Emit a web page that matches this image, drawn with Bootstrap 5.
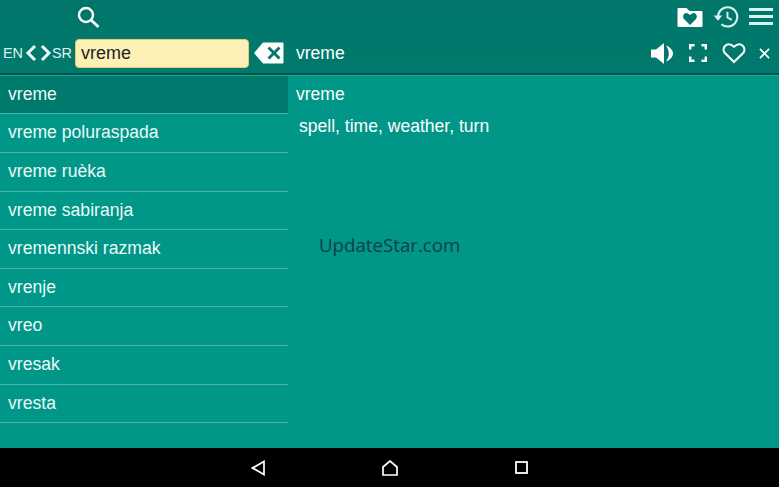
<!DOCTYPE html>
<html lang="en"><head><meta charset="utf-8"><title>Dictionary</title>
<link href="https://cdn.jsdelivr.net/npm/bootstrap@5.3.0/dist/css/bootstrap.min.css" rel="stylesheet">
<style>
html,body{height:487px;overflow:hidden;margin:0}
body{background:#009688;font-family:"Liberation Sans",Arial,sans-serif;color:#fff;width:779px}
.appframe{height:487px}
.hdr{background:linear-gradient(#00766a,#007a6c);height:75px;border-bottom:2px solid #04574e;box-shadow:0 1px 0 #1aa595}
.hdr-top{height:33px;padding-left:76px;padding-right:6px}
.tools-b{gap:10px}
.hdr-bot{height:40px}
.left-hdr{width:289px;padding-left:3px}
.lang{font-size:14.4px;line-height:1;color:#dff5f1}
.chev-a{margin-left:2px;margin-right:3px}
.srch{flex:none;width:174px;height:29px;background:#fdf0b6;border:1px solid #e6c877;border-radius:4px;font-size:18px;color:#222;padding:0 0 0 5px;margin-left:3px;margin-right:5px;line-height:27px;box-shadow:none}
.srch:focus{background:#fdf0b6;border-color:#e6c877;box-shadow:none;color:#222}
.term{font-size:17.5px;padding-left:7px}
.tools-a{padding-right:9px}
.gap-spk{margin-right:16px}
.gap-full{margin-right:15px}
.gap-heart{margin-right:13px}
.main-area{height:373px;position:relative}
.word-col{width:288px;display:block;padding-top:.8px}
.word-col>.word-item,.word-col>.word-item:last-child{height:38.6px;line-height:37px;font-size:17.6px;padding:0 0 0 8px;background:transparent;border:0;border-bottom:1px solid #4cb5a9;color:#eafaf7;border-radius:0}
.word-col>.word-item.active{background:#007a6c;color:#eafaf7;border-bottom-color:#4cb5a9;margin:0}
.detail{padding-left:8px;font-size:17.5px;padding-top:9px}
.detail-word{line-height:20px;margin-bottom:12px}
.detail-mean{padding-left:3px;line-height:20px;font-size:17.56px}
.wmark{position:absolute;left:319px;top:157px;font-family:"Open Sans",sans-serif;font-size:18.7px;color:#0f3f48;line-height:26px}
.sysnav{height:39px;background:#000;padding-left:251px}
.sysnav svg:nth-child(2){margin-left:117px}
.sysnav svg:nth-child(3){margin-left:117px}
</style></head>
<body>
<div class="appframe d-flex flex-column">
<header class="hdr">
 <div class="hdr-top d-flex align-items-center">
  <svg width="24" height="24" viewBox="0 0 24 24" fill="none" stroke="#fff"><circle cx="10" cy="10" r="7" stroke-width="2.4"/><path d="M15 15l7.5 7" stroke-width="2.8"/></svg>
  <div class="ms-auto d-flex align-items-center tools-b">
   <svg width="26" height="20" viewBox="0 0 26 20"><path fill="#fff" fill-rule="evenodd" d="M1.500 1h8l3 3h12a1 1 0 0 1 1 1v14a1 1 0 0 1-1 1H1.500a1 1 0 0 1-1-1V2a1 1 0 0 1 1-1zM13 18l6-6c2.500-3.500-1-7.500-4-5.500l-2 1.500-2-1.500c-3-2-6.500 2-4 5.500z"/></svg>
   <svg width="26" height="24" viewBox="0 0 27 24" fill="none" stroke="#d9f3ee"><path d="M5.200 12a10 10 0 1 1 3.500 7.500" stroke-width="2.200"/><path d="M0.700 10.500h9l-4.500 5.500z" fill="#d9f3ee" stroke="none"/><path d="M15 6.500v6l4.500 2.500" stroke-width="2"/></svg>
   <svg width="24" height="17" viewBox="0 0 24 17" fill="#d9f3ee"><rect y="0" width="24" height="3"/><rect y="7" width="24" height="3"/><rect y="14" width="24" height="3"/></svg>
  </div>
 </div>
 <div class="hdr-bot d-flex align-items-center">
  <div class="left-hdr d-flex align-items-center">
   <span class="lang">EN</span>
   <svg class="chev-a" width="12" height="18" viewBox="0 0 12 18" fill="none" stroke="#eafaf7" stroke-width="3"><path d="M10 2L3 9l7 7"/></svg>
   <svg class="chev-b" width="12" height="18" viewBox="0 0 12 18" fill="none" stroke="#eafaf7" stroke-width="3"><path d="M2 2l7 7-7 7"/></svg>
   <span class="lang">SR</span>
   <input class="form-control srch" value="vreme" aria-label="Search">
   <svg width="30" height="22" viewBox="0 0 30 22"><path fill="#fff" fill-rule="evenodd" d="M9 0.500h19.500a1 1 0 0 1 1 1v19a1 1 0 0 1-1 1H9L0 11zM13.500 6.500l4.500 4.500-4.500 4.500 2 2 4.500-4.500 4.500 4.500 2-2-4.500-4.500 4.500-4.500-2-2-4.500 4.500-4.500-4.500z"/></svg>
  </div>
  <span class="term">vreme</span>
  <div class="ms-auto d-flex align-items-center tools-a">
   <svg class="gap-spk" width="22" height="21" viewBox="0 0 22 21"><path fill="#fff" d="M0 6.500h5L13 0v21L5 14.500H0z"/><path fill="#fff" d="M15 2.500c3 1 7 4 7 8s-4 7-7 8c1.500-2 2.800-5 2.800-8s-1.300-6-2.800-8z"/></svg>
   <svg class="gap-full" width="18" height="18" viewBox="0 0 18 18" fill="none" stroke="#fff" stroke-width="2.400"><path d="M1.200 5.500V1.200H5.500M12.500 1.200h4.300V5.500M16.800 12.500v4.300H12.500M5.500 16.800H1.200V12.500"/></svg>
   <svg class="gap-heart" width="24" height="22" viewBox="0 0 25 22" fill="none" stroke="#fff" stroke-width="2.200"><path d="M12.500 20.500L3 11C-1 6 5-2 12.500 4.500 20-2 26 6 22 11z"/></svg>
   <svg width="11" height="11" viewBox="0 0 12 12" stroke="#fff" stroke-width="1.800"><path d="M1 1l10 10M11 1L1 11"/></svg>
  </div>
 </div>
</header>
<main class="main-area d-flex">
 <div class="word-col list-group list-group-flush">
  <div class="list-group-item word-item active">vreme</div>
  <div class="list-group-item word-item">vreme poluraspada</div>
  <div class="list-group-item word-item">vreme ruèka</div>
  <div class="list-group-item word-item">vreme sabiranja</div>
  <div class="list-group-item word-item">vremennski razmak</div>
  <div class="list-group-item word-item">vrenje</div>
  <div class="list-group-item word-item">vreo</div>
  <div class="list-group-item word-item">vresak</div>
  <div class="list-group-item word-item">vresta</div>
 </div>
 <div class="detail flex-grow-1">
  <div class="detail-word">vreme</div>
  <div class="detail-mean">spell, time, weather, turn</div>
 </div>
 <div class="wmark">UpdateStar.com</div>
</main>
<nav class="sysnav d-flex align-items-center">
 <svg width="14" height="16" viewBox="0 0 14 16" fill="none" stroke="#fff" stroke-width="1.700"><path d="M13 1.500v13L1.500 8z"/></svg>
 <svg width="16" height="16" viewBox="0 0 16 16" fill="none" stroke="#fff" stroke-width="1.700"><path d="M1 7l7-6 7 6v8H1z"/></svg>
 <svg width="13" height="13" viewBox="0 0 13 13" fill="none" stroke="#fff" stroke-width="1.800"><rect x="1" y="1" width="11" height="11"/></svg>
</nav>
</div>
</body></html>
